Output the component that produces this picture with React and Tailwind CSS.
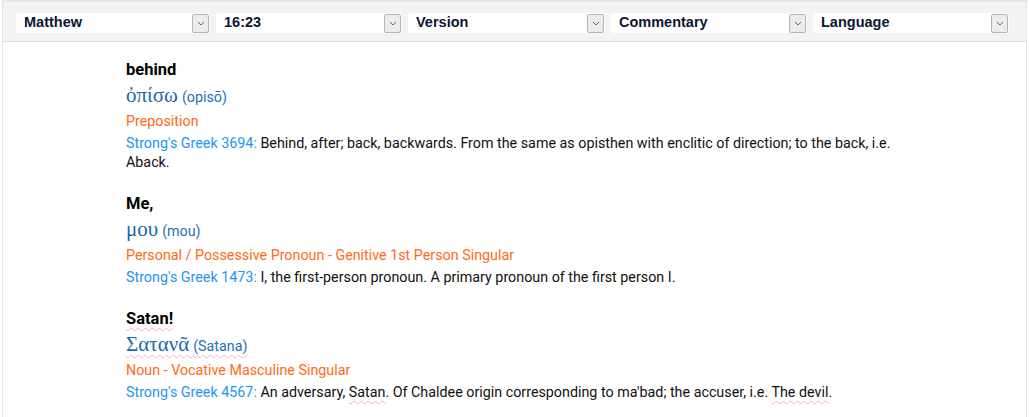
import React from 'react';

const selects = [
  { label: 'Matthew', w: 'w-[194px]' },
  { label: '16:23', w: 'w-[186px]' },
  { label: 'Version', w: 'w-[197px]' },
  { label: 'Commentary', w: 'w-[196px]' },
  { label: 'Language', w: 'w-[196px]' },
];

function Chevron() {
  return (
    <svg width="8" height="5" viewBox="0 0 8 5" fill="none">
      <path d="M1 1l3 3 3-3" stroke="#666" strokeWidth="1" />
    </svg>
  );
}

function Select({ label, w }) {
  return (
    <div className={`flex h-[20px] ${w} items-center rounded-[3px] bg-white pl-[8px] pr-[1px]`}>
      <span className="flex-1 font-['Liberation_Sans',Arial,sans-serif] text-[14.5px] font-bold text-[#0b1633]">
        {label}
      </span>
      <span className="flex h-[19px] w-[17px] items-center justify-center rounded-[2px] border border-[#b5b5b5] bg-[#ececec]">
        <Chevron />
      </span>
    </div>
  );
}

const squiggle = 'underline decoration-wavy decoration-[#f7b0b0] decoration-1 underline-offset-[3px]';

const entries = [
  {
    word: 'behind',
    greek: 'ὀπίσω',
    translit: 'opisō',
    pos: 'Preposition',
    num: '3694',
    def: 'Behind, after; back, backwards. From the same as opisthen with enclitic of direction; to the back, i.e. Aback.',
  },
  {
    word: 'Me,',
    greek: 'μου',
    translit: 'mou',
    pos: 'Personal / Possessive Pronoun - Genitive 1st Person Singular',
    num: '1473',
    def: 'I, the first-person pronoun. A primary pronoun of the first person I.',
  },
  {
    word: 'Satan!',
    greek: 'Σατανᾶ',
    translit: 'Satana',
    pos: 'Noun - Vocative Masculine Singular',
    num: '4567',
    satan: true,
  },
];

function Entry({ e }) {
  return (
    <div className="flex flex-col">
      <div className="text-[16.5px] font-bold leading-[22px] text-black">
        <span className={e.satan ? squiggle : ''}>{e.word}</span>
      </div>
      <div className="mt-[2px] leading-[24px] text-[#1d68aa]">
        <span className={e.satan ? squiggle : ''}>
          <span className="font-['Liberation_Serif',serif] text-[21px]">{e.greek}</span>{' '}
          <span className="text-[14.3px] text-[#1f70b5]">({e.translit})</span>
        </span>
      </div>
      <div className="mt-[1px] text-[14.3px] leading-[22px] text-[#ff6b14]">{e.pos}</div>
      <div className="mt-[2px] text-[14.3px] leading-[19px] text-[#111]">
        <span className="text-[#2196f3]">Strong's Greek {e.num}:</span>{' '}
        {e.satan ? (
          <>
            An adversary, <span className={squiggle}>Satan</span>. Of Chaldee origin corresponding to ma'bad; the accuser, i.e.{' '}
            <span className={squiggle}>The devil</span>.
          </>
        ) : (
          e.def
        )}
      </div>
    </div>
  );
}

export default function App() {
  return (
    <div className="min-h-[417px] bg-white font-['Roboto',sans-serif]">
      <div className="mx-[2px] min-h-[417px] border-x border-[#e4e4e4]">
        <div className="flex h-[42px] items-center gap-[6px] border-t-[2px] border-b border-t-[#e6e6e6] border-b-[#e2e2e2] bg-[#f3f3f3] pl-[13px] pt-[3px]">
          {selects.map((s) => (
            <Select key={s.label} label={s.label} w={s.w} />
          ))}
        </div>
        <div className="flex w-[916px] flex-col gap-[21px] pl-[123px] pt-[17px]">
          {entries.map((e) => (
            <Entry key={e.word} e={e} />
          ))}
        </div>
      </div>
    </div>
  );
}
